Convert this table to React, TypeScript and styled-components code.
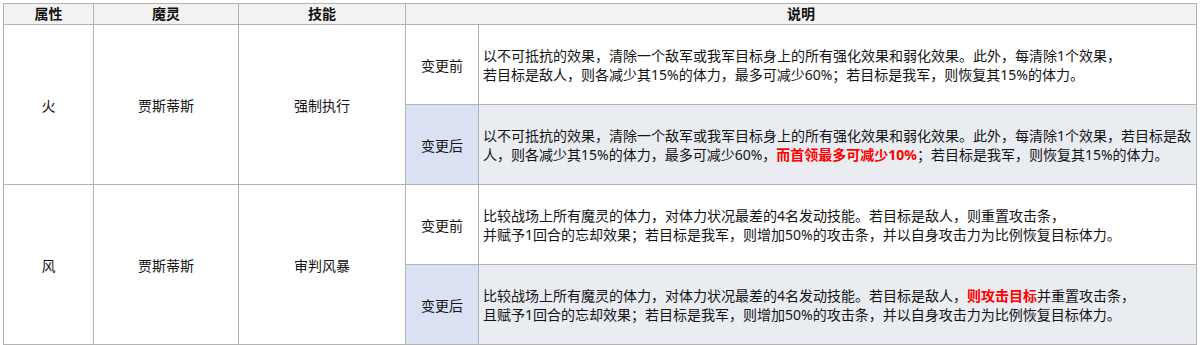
import type { ReactNode } from 'react'
import styled, { createGlobalStyle } from 'styled-components'

const Global = createGlobalStyle`
  body {
    margin: 0;
    padding: 3px 3px 0 3px;
    background: #fff;
    font-family: "Noto Sans", "Noto Sans CJK SC", sans-serif;
  }
`

const Red = styled.span`
  color: #ff0000;
  font-weight: 700;
`

const Table = styled.table`
  width: 1194px;
  border-collapse: collapse;
  table-layout: fixed;
  font-size: 14px;
  color: #141414;
`

const Th = styled.th`
  height: 20px;
  padding: 0;
  background: #f2f2f2;
  border: 1px solid #b3b3b3;
  font-weight: 700;
  font-size: 14px;
  line-height: 20px;
  text-align: center;
  color: #111;
`

const Td = styled.td`
  border: 1px solid #b3b3b3;
  text-align: center;
  vertical-align: middle;
  padding: 0;
`

const Label = styled.td<{ $after?: boolean }>`
  height: 79px;
  border: 1px solid #b3b3b3;
  text-align: center;
  vertical-align: middle;
  padding: 0;
  background: ${(p) => (p.$after ? '#d9e1f2' : '#fff')};
`

const Desc = styled.td<{ $after?: boolean }>`
  border: 1px solid #b3b3b3;
  vertical-align: middle;
  padding: 0 0 0 4px;
  line-height: 19px;
  white-space: nowrap;
  background: ${(p) => (p.$after ? '#e9ecf0' : '#fff')};
`

interface RowData {
  attr: string
  name: string
  skill: string
  before: ReactNode
  after: ReactNode
}

const rows: RowData[] = [
  {
    attr: '火',
    name: '贾斯蒂斯',
    skill: '强制执行',
    before: (
      <>
        以不可抵抗的效果，清除一个敌军或我军目标身上的所有强化效果和弱化效果。此外，每清除1个效果，
        <br />
        若目标是敌人，则各减少其15%的体力，最多可减少60%；若目标是我军，则恢复其15%的体力。
      </>
    ),
    after: (
      <>
        以不可抵抗的效果，清除一个敌军或我军目标身上的所有强化效果和弱化效果。此外，每清除1个效果，若目标是敌
        <br />
        人，则各减少其15%的体力，最多可减少60%，<Red>而首领最多可减少10%</Red>；若目标是我军，则恢复其15%的体力。
      </>
    ),
  },
  {
    attr: '风',
    name: '贾斯蒂斯',
    skill: '审判风暴',
    before: (
      <>
        比较战场上所有魔灵的体力，对体力状况最差的4名发动技能。若目标是敌人，则重置攻击条，
        <br />
        并赋予1回合的忘却效果；若目标是我军，则增加50%的攻击条，并以自身攻击力为比例恢复目标体力。
      </>
    ),
    after: (
      <>
        比较战场上所有魔灵的体力，对体力状况最差的4名发动技能。若目标是敌人，<Red>则攻击目标</Red>并重置攻击条，
        <br />
        且赋予1回合的忘却效果；若目标是我军，则增加50%的攻击条，并以自身攻击力为比例恢复目标体力。
      </>
    ),
  },
]

const Group = ({ row }: { row: RowData }) => (
  <>
    <tr>
      <Td rowSpan={2}>{row.attr}</Td>
      <Td rowSpan={2}>{row.name}</Td>
      <Td rowSpan={2}>{row.skill}</Td>
      <Label>变更前</Label>
      <Desc>{row.before}</Desc>
    </tr>
    <tr>
      <Label $after>变更后</Label>
      <Desc $after>{row.after}</Desc>
    </tr>
  </>
)

export default function App() {
  return (
    <>
      <Global />
      <Table>
        <colgroup>
          <col style={{ width: 90 }} />
          <col style={{ width: 145 }} />
          <col style={{ width: 167 }} />
          <col style={{ width: 73 }} />
          <col />
        </colgroup>
        <thead>
          <tr>
            <Th>属性</Th>
            <Th>魔灵</Th>
            <Th>技能</Th>
            <Th colSpan={2}>说明</Th>
          </tr>
        </thead>
        <tbody>
          {rows.map((r) => (
            <Group key={r.skill} row={r} />
          ))}
        </tbody>
      </Table>
    </>
  )
}
